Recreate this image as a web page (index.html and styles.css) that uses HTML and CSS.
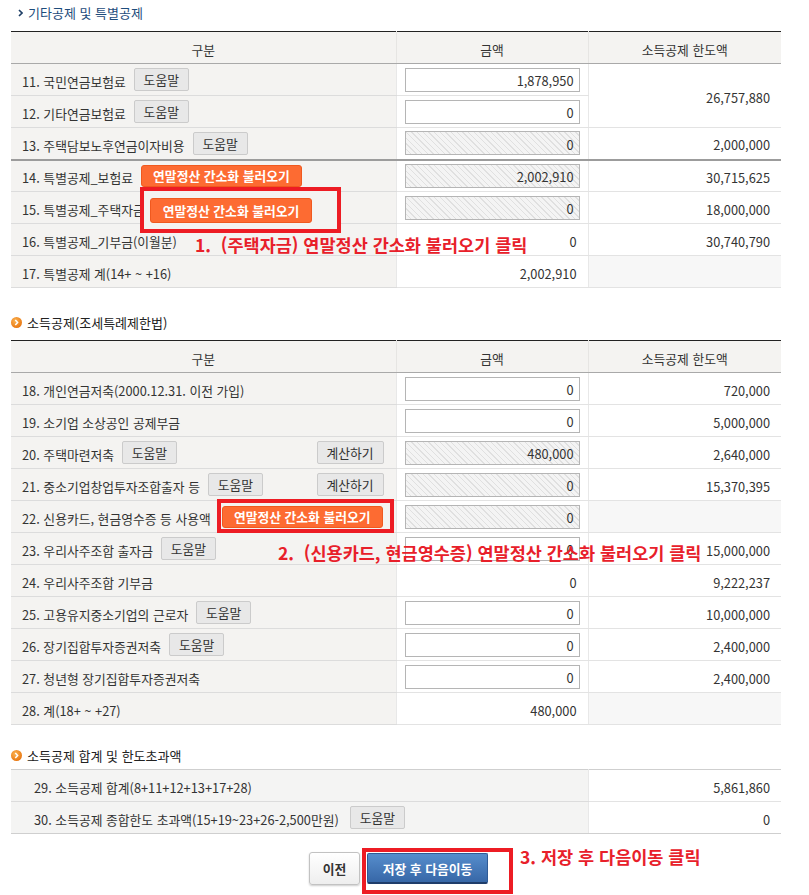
FILE: index.html
```html
<!DOCTYPE html>
<html lang="ko">
<head>
<meta charset="utf-8">
<title>소득공제</title>
<link rel="stylesheet" href="styles.css">
</head>
<body>
<div class="page">
  <h3 class="sec-title sec-blue"><svg class="chev" width="5" height="8" viewBox="0 0 5 8"><path d="M1 1 L4 4 L1 7" fill="none" stroke="#1f3f66" stroke-width="1.6"/></svg>기타공제 및 특별공제</h3>
  <table class="grid">
    <colgroup><col class="c1"><col class="c2"><col class="c3"></colgroup>
    <thead><tr><th>구분</th><th>금액</th><th>소득공제 한도액</th></tr></thead>
    <tbody>
      <tr><td class="lab"><div class="cell"><span class="txt">11. 국민연금보험료</span><button class="btn-help">도움말</button></div></td><td class="amt"><input class="num" value="1,878,950" readonly></td><td class="val" rowspan="2">26,757,880</td></tr>
      <tr><td class="lab"><div class="cell"><span class="txt">12. 기타연금보험료</span><button class="btn-help">도움말</button></div></td><td class="amt"><input class="num" value="0" readonly></td></tr>
      <tr class="sep"><td class="lab"><div class="cell"><span class="txt">13. 주택담보노후연금이자비용</span><button class="btn-help">도움말</button></div></td><td class="amt"><input class="num dis" value="0" readonly></td><td class="val">2,000,000</td></tr>
      <tr><td class="lab"><div class="cell"><span class="txt">14. 특별공제_보험료</span><button class="btn-orange">연말정산 간소화 불러오기</button></div></td><td class="amt"><input class="num dis" value="2,002,910" readonly></td><td class="val">30,715,625</td></tr>
      <tr><td class="lab"><div class="cell"><span class="txt">15. 특별공제_주택자금</span></div></td><td class="amt"><input class="num dis" value="0" readonly></td><td class="val">18,000,000</td></tr>
      <tr><td class="lab"><div class="cell"><span class="txt">16. 특별공제_기부금(이월분)</span></div></td><td class="val">0</td><td class="val">30,740,790</td></tr>
      <tr><td class="lab"><div class="cell"><span class="txt">17. 특별공제 계(14+ ~ +16)</span></div></td><td class="val">2,002,910</td><td class="val gray"></td></tr>
    </tbody>
  </table>

  <h3 class="sec-title sec-dot s2"><svg class="dot" width="11" height="11" viewBox="0 0 11 11"><defs><radialGradient id="og" cx="40%" cy="35%" r="70%"><stop offset="0" stop-color="#fbb454"/><stop offset="1" stop-color="#e8730c"/></radialGradient></defs><circle cx="5.5" cy="5.5" r="5.5" fill="url(#og)"/><path d="M4.3 3 L6.6 5.5 L4.3 8" fill="none" stroke="#fff" stroke-width="1.5"/></svg>소득공제(조세특례제한법)</h3>
  <table class="grid">
    <colgroup><col class="c1"><col class="c2"><col class="c3"></colgroup>
    <thead><tr><th>구분</th><th>금액</th><th>소득공제 한도액</th></tr></thead>
    <tbody>
      <tr><td class="lab"><div class="cell"><span class="txt">18. 개인연금저축(2000.12.31. 이전 가입)</span></div></td><td class="amt"><input class="num" value="0" readonly></td><td class="val">720,000</td></tr>
      <tr><td class="lab"><div class="cell"><span class="txt">19. 소기업 소상공인 공제부금</span></div></td><td class="amt"><input class="num" value="0" readonly></td><td class="val">5,000,000</td></tr>
      <tr><td class="lab"><div class="cell"><span class="txt">20. 주택마련저축</span><button class="btn-help">도움말</button><button class="btn-help btn-calc">계산하기</button></div></td><td class="amt"><input class="num dis" value="480,000" readonly></td><td class="val">2,640,000</td></tr>
      <tr><td class="lab"><div class="cell"><span class="txt">21. 중소기업창업투자조합출자 등</span><button class="btn-help">도움말</button><button class="btn-help btn-calc">계산하기</button></div></td><td class="amt"><input class="num dis" value="0" readonly></td><td class="val">15,370,395</td></tr>
      <tr><td class="lab"><div class="cell"><span class="txt">22. 신용카드, 현금영수증 등 사용액</span><button class="btn-orange wide-gap">연말정산 간소화 불러오기</button></div></td><td class="amt"><input class="num dis" value="0" readonly></td><td class="val gray"></td></tr>
      <tr><td class="lab"><div class="cell"><span class="txt">23. 우리사주조합 출자금</span><button class="btn-help">도움말</button></div></td><td class="amt"><input class="num" value="0" readonly></td><td class="val">15,000,000</td></tr>
      <tr><td class="lab"><div class="cell"><span class="txt">24. 우리사주조합 기부금</span></div></td><td class="val">0</td><td class="val">9,222,237</td></tr>
      <tr><td class="lab"><div class="cell"><span class="txt">25. 고용유지중소기업의 근로자</span><button class="btn-help">도움말</button></div></td><td class="amt"><input class="num" value="0" readonly></td><td class="val">10,000,000</td></tr>
      <tr><td class="lab"><div class="cell"><span class="txt">26. 장기집합투자증권저축</span><button class="btn-help">도움말</button></div></td><td class="amt"><input class="num" value="0" readonly></td><td class="val">2,400,000</td></tr>
      <tr><td class="lab"><div class="cell"><span class="txt">27. 청년형 장기집합투자증권저축</span></div></td><td class="amt"><input class="num" value="0" readonly></td><td class="val">2,400,000</td></tr>
      <tr><td class="lab"><div class="cell"><span class="txt">28. 계(18+ ~ +27)</span></div></td><td class="val">480,000</td><td class="val gray"></td></tr>
    </tbody>
  </table>

  <h3 class="sec-title sec-dot s3"><svg class="dot" width="11" height="11" viewBox="0 0 11 11"><circle cx="5.5" cy="5.5" r="5.5" fill="url(#og)"/><path d="M4.3 3 L6.6 5.5 L4.3 8" fill="none" stroke="#fff" stroke-width="1.5"/></svg>소득공제 합계 및 한도초과액</h3>
  <table class="grid sum">
    <colgroup><col class="c1"><col class="c2"><col class="c3"></colgroup>
    <tbody>
      <tr><td class="lab2" colspan="2"><div class="cell"><span class="txt">29. 소득공제 합계(8+11+12+13+17+28)</span></div></td><td class="val">5,861,860</td></tr>
      <tr><td class="lab2" colspan="2"><div class="cell"><span class="txt">30. 소득공제 종합한도 초과액(15+19~23+26-2,500만원)</span><button class="btn-help wide-gap">도움말</button></div></td><td class="val">0</td></tr>
    </tbody>
  </table>

  <div class="actions">
    <button class="btn-prev">이전</button>
    <button class="btn-next">저장 후 다음이동</button>
  </div>

  <div class="anno-box box1"><button class="btn-orange big">연말정산 간소화 불러오기</button></div>
  <div class="anno-text t1">1.&nbsp; (주택자금) 연말정산 간소화 불러오기 클릭</div>
  <div class="anno-box box2"></div>
  <div class="anno-text t2">2.&nbsp; (신용카드, 현금영수증) 연말정산 간소화 불러오기 클릭</div>
  <div class="anno-box box3"></div>
  <div class="anno-text t3">3. 저장 후 다음이동 클릭</div>
</div>
</body>
</html>
```

FILE: styles.css
```css
* { box-sizing: border-box; }

body {
  margin: 0;
  background: #fff;
  font-family: "Noto Sans CJK KR", "Noto Sans", sans-serif;
  font-size: 12.8px;
  color: #333;
}

.page {
  position: relative;
  width: 809px;
  height: 895px;
  padding: 0 28px 0 11px;
  overflow: hidden;
}

.sec-title {
  margin: 0;
  font-size: 13px;
  font-weight: normal;
  display: flex;
  align-items: center;
}

.sec-blue {
  height: 31px;
  padding: 0 0 6px 7px;
  color: #1d4c7c;
}

.chev { margin-right: 5px; }

.sec-dot { height: 22px; color: #222; }
.sec-dot .dot { margin-right: 5px; }
.s2 { margin: 23px 0 7px; }
.s3 { margin: 19px 0 3px; }

.grid {
  width: 770px;
  border-collapse: collapse;
  table-layout: fixed;
  border-top: 1px solid #222;
}
.grid col.c1 { width: 385px; }
.grid col.c2 { width: 192px; }
.grid col.c3 { width: 193px; }

.grid th {
  height: 32px;
  padding: 3px 0 0;
  background: #f4f3f1;
  font-weight: normal;
  color: #333;
  border-bottom: 1px solid #a9a9a9;
  border-left: 1px solid #e6e5e3;
}
.grid th:first-child { border-left: 0; }

.grid td {
  height: 32px;
  padding: 0;
  border-bottom: 1px solid #e3e3e3;
  border-left: 1px solid #e8e8e8;
}
.grid td:first-child { border-left: 0; }
.grid tr.sep td { border-bottom: 2px solid #9c9c9c; }

td.lab {
  background: #f4f3f1;
  padding-left: 11px;
  border-bottom-color: #dcdcdc;
}
td.lab2 {
  background: #f4f4f3;
  padding-left: 23px;
  border-bottom-color: #dcdcdc;
}

.cell {
  display: flex;
  align-items: center;
  gap: 8px;
  white-space: nowrap;
}
.txt { padding-top: 4px; }

.btn-help {
  height: 23px;
  width: 55px;
  padding: 0;
  border: 1px solid #cbcbcb;
  border-radius: 2px;
  background: #e8e8e8;
  font: inherit;
  color: #333;
}
.btn-calc {
  width: 67px;
  margin-left: auto;
  margin-right: 12px;
}
.wide-gap { margin-left: 3px; }

.btn-orange {
  width: 161px;
  height: 22px;
  padding: 0;
  border: 1px solid #f0591f;
  border-radius: 3px;
  background: #fd6b32;
  color: #fff;
  font: inherit;
  font-weight: bold;
}
.btn-orange.big { width: 162px; height: 25px; }

td.amt { padding: 0 8px; }

input.num {
  display: block;
  width: 175px;
  height: 24px;
  padding: 2px 5px 0;
  border: 1px solid #b5b5b5;
  background: #fff;
  font: inherit;
  color: #333;
  text-align: right;
  outline: none;
}
input.num.dis {
  background: repeating-linear-gradient(45deg, #f4f4f4 0 3px, #e0e0e0 3px 4px);
}

td.val {
  text-align: right;
  padding: 3px 11px 0 0;
  background: #fff;
}
td.gray { background: #f7f7f7; }

.sum { border-top: 1px solid #cfcfcf; }
.sum tr:last-child td { border-bottom: 1px solid #cfcfcf; }

.actions {
  display: flex;
  justify-content: center;
  align-items: center;
  gap: 7px;
  margin-top: 18px;
  padding-left: 5px;
}

.btn-prev {
  width: 51px;
  height: 33px;
  padding: 0;
  border: 1px solid #c2c2c2;
  border-radius: 3px;
  background: linear-gradient(#ffffff, #eeeeee);
  box-shadow: 0 1px 2px rgba(0, 0, 0, 0.2);
  font: inherit;
  font-weight: bold;
  color: #333;
}

.btn-next {
  width: 121px;
  height: 31px;
  padding: 0;
  border: 1px solid #2f5b96;
  border-bottom: 2px solid #1f3d6a;
  border-radius: 2px;
  background: linear-gradient(#568dcc, #3767a7);
  font: inherit;
  font-weight: bold;
  color: #fff;
}

.anno-box {
  position: absolute;
  border: 4px solid #ed1c24;
}
.box1 {
  left: 140px; top: 187px; width: 201px; height: 46px;
  background: #f4f3f1;
  display: flex;
  align-items: center;
  padding-left: 6px;
}
.box2 { left: 217px; top: 499px; width: 177px; height: 34px; }
.box3 { left: 362px; top: 848px; width: 151px; height: 46px; }

.anno-text {
  position: absolute;
  color: #e8202a;
  font-size: 17.5px;
  font-weight: bold;
  line-height: 20px;
  white-space: nowrap;
}
.t1 { left: 195px; top: 235px; }
.t2 { left: 278px; top: 543px; }
.t3 { left: 520px; top: 847px; }
```
